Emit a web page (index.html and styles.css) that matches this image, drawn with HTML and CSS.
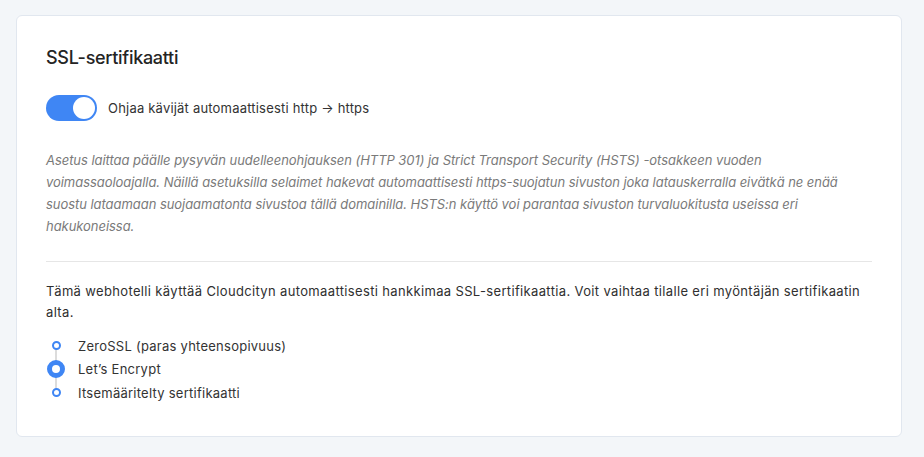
FILE: index.html
```html
<!DOCTYPE html>
<html lang="fi">
<head>
    <meta charset="UTF-8">
    <meta name="viewport" content="width=device-width, initial-scale=1.0">
    <title>SSL-sertifikaatti</title>
    <link rel="stylesheet" href="styles.css">
</head>
<body>
    <div class="page">
        <div class="card">
            <h2 class="card-title">SSL-sertifikaatti</h2>

            <label class="switch-row">
                <span class="switch on"><span class="switch-thumb"></span></span>
                <span class="switch-label">Ohjaa kävijät automaattisesti http → https</span>
            </label>

            <p class="hint">Asetus laittaa päälle pysyvän uudelleenohjauksen (HTTP 301) ja Strict Transport Security (HSTS) -otsakkeen vuoden voimassaoloajalla. Näillä asetuksilla selaimet hakevat automaattisesti https-suojatun sivuston joka latauskerralla eivätkä ne enää suostu lataamaan suojaamatonta sivustoa tällä domainilla. HSTS:n käyttö voi parantaa sivuston turvaluokitusta useissa eri hakukoneissa.</p>

            <hr class="divider">

            <p class="text">Tämä webhotelli käyttää Cloudcityn automaattisesti hankkimaa SSL-sertifikaattia. Voit vaihtaa tilalle eri myöntäjän sertifikaatin alta.</p>

            <ul class="steps">
                <li class="step">
                    <span class="dot"></span>
                    <span class="step-label">ZeroSSL (paras yhteensopivuus)</span>
                </li>
                <li class="step active">
                    <span class="dot"></span>
                    <span class="step-label">Let’s Encrypt</span>
                </li>
                <li class="step">
                    <span class="dot"></span>
                    <span class="step-label">Itsemääritelty sertifikaatti</span>
                </li>
            </ul>
        </div>
    </div>
</body>
</html>
```

FILE: styles.css
```css
body {
    margin: 0;
    font-family: Inter, 'Noto Sans', sans-serif;
    background-color: #f3f6f9;
    color: #2f2f2f;
}

.page {
    padding: 15px 22px 20px 16px;
}

.card {
    background: white;
    border: 1px solid #e1e7ef;
    border-radius: 6px;
    padding: 29px 29px 31px 29px;
}

.card-title {
    margin: 0 0 24px 0;
    font-size: 18px;
    line-height: 26px;
    font-weight: 500;
    letter-spacing: -0.3px;
    color: #242424;
}

.switch-row {
    display: flex;
    align-items: center;
    gap: 11px;
    height: 26px;
}

.switch {
    position: relative;
    width: 51px;
    height: 26px;
    border-radius: 13px;
    background-color: #d5dbe3;
    flex-shrink: 0;
}

.switch.on {
    background-color: #3f86f4;
}

.switch-thumb {
    position: absolute;
    top: 2px;
    left: 2px;
    width: 22px;
    height: 22px;
    border-radius: 50%;
    background: white;
}

.switch.on .switch-thumb {
    left: 27px;
}

.switch-label {
    font-size: 13px;
    letter-spacing: 0.2px;
    color: #333;
}

.hint {
    max-width: 815px;
    margin: 28px 0 0 0;
    font-size: 13px;
    line-height: 22px;
    font-style: italic;
    letter-spacing: -0.05px;
    color: #7a7a7a;
}

.divider {
    border: none;
    border-top: 1px solid #e6e6e6;
    margin: 24px 0 19px 0;
}

.text {
    margin: 0;
    font-size: 13px;
    line-height: 21px;
    letter-spacing: 0.35px;
    color: #2f2f2f;
}

.steps {
    list-style: none;
    margin: 11px 0 0 0;
    padding: 0;
}

.step {
    position: relative;
    display: flex;
    align-items: center;
    height: 23.5px;
    font-size: 13px;
    letter-spacing: 0.25px;
    color: #333;
}

/* connecting line between the dots */
.step + .step::before {
    content: "";
    position: absolute;
    left: 9px;
    top: -12px;
    width: 2px;
    height: 24px;
    background: #dcdcdc;
}

.dot {
    position: relative;
    z-index: 1;
    width: 20px;
    display: flex;
    justify-content: center;
    margin-right: 12px;
}

.dot::after {
    content: "";
    width: 5px;
    height: 5px;
    border: 2px solid #3f86f4;
    border-radius: 50%;
    background: white;
}

.step.active .dot::after {
    width: 8px;
    height: 8px;
    border-width: 5px;
}
```
